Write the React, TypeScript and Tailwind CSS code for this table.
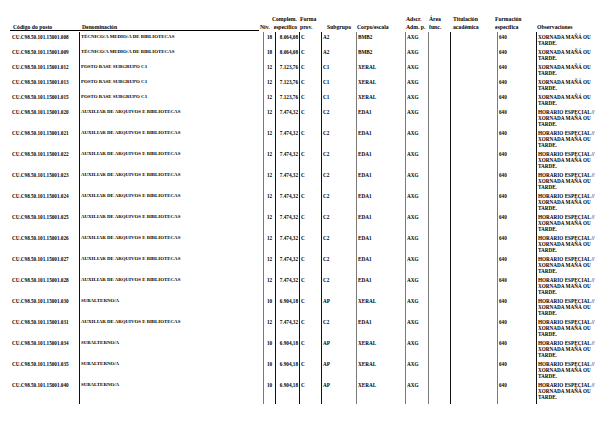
import React from "react";

type Row = {
  code: string;
  name: string;
  niv: string;
  complem: string;
  sub: string;
  corpo: string;
  special: boolean;
};

const TECNICO = "TÉCNICO/A MEDIO/A DE BIBLIOTECAS";
const POSTO = "POSTO BASE SUBGRUPO C1";
const AUX = "AUXILIAR DE ARQUIVOS E BIBLIOTECAS";
const SUBAL = "SUBALTERNO/A";

const ROWS: Row[] = [
  { code: "008", name: TECNICO, niv: "18", complem: "8.064,08", sub: "A2", corpo: "BMB2", special: false },
  { code: "009", name: TECNICO, niv: "18", complem: "8.064,08", sub: "A2", corpo: "BMB2", special: false },
  { code: "012", name: POSTO, niv: "12", complem: "7.123,76", sub: "C1", corpo: "XERAL", special: false },
  { code: "013", name: POSTO, niv: "12", complem: "7.123,76", sub: "C1", corpo: "XERAL", special: false },
  { code: "015", name: POSTO, niv: "12", complem: "7.123,76", sub: "C1", corpo: "XERAL", special: false },
  { code: "020", name: AUX, niv: "12", complem: "7.474,32", sub: "C2", corpo: "EDA1", special: true },
  { code: "021", name: AUX, niv: "12", complem: "7.474,32", sub: "C2", corpo: "EDA1", special: true },
  { code: "022", name: AUX, niv: "12", complem: "7.474,32", sub: "C2", corpo: "EDA1", special: true },
  { code: "023", name: AUX, niv: "12", complem: "7.474,32", sub: "C2", corpo: "EDA1", special: true },
  { code: "024", name: AUX, niv: "12", complem: "7.474,32", sub: "C2", corpo: "EDA1", special: true },
  { code: "025", name: AUX, niv: "12", complem: "7.474,32", sub: "C2", corpo: "EDA1", special: true },
  { code: "026", name: AUX, niv: "12", complem: "7.474,32", sub: "C2", corpo: "EDA1", special: true },
  { code: "027", name: AUX, niv: "12", complem: "7.474,32", sub: "C2", corpo: "EDA1", special: true },
  { code: "028", name: AUX, niv: "12", complem: "7.474,32", sub: "C2", corpo: "EDA1", special: true },
  { code: "030", name: SUBAL, niv: "10", complem: "6.904,18", sub: "AP", corpo: "XERAL", special: true },
  { code: "031", name: AUX, niv: "12", complem: "7.474,32", sub: "C2", corpo: "EDA1", special: true },
  { code: "034", name: SUBAL, niv: "10", complem: "6.904,18", sub: "AP", corpo: "XERAL", special: true },
  { code: "035", name: SUBAL, niv: "10", complem: "6.904,18", sub: "AP", corpo: "XERAL", special: true },
  { code: "040", name: SUBAL, niv: "10", complem: "6.904,18", sub: "AP", corpo: "XERAL", special: true },
];

function Head({ top, bottom, className = "" }: { top?: string; bottom: string; className?: string }) {
  return (
    <div className={`flex flex-col gap-[2px] whitespace-nowrap ${className}`}>
      <div className="h-[6px] leading-[6px]">{top}</div>
      <div className="h-[6px] leading-[6px]">{bottom}</div>
    </div>
  );
}

// vertical rule between two cells
function Rule({ gray = false }: { gray?: boolean }) {
  return <div className={`w-px shrink-0 ${gray ? "bg-[#7a7a7a]" : "bg-[#111]"}`} />;
}

export default function App() {
  return (
    <div className="w-[615px] h-[439px] overflow-hidden bg-white text-black font-bold font-['Liberation_Serif','Times_New_Roman',serif]">
      {/* header */}
      <div className="flex items-end pt-[16px] text-[5.7px]">
        <div className="ml-[10px] flex w-[249px] flex-col">
          <div className="flex">
            <Head bottom="Código do posto" className="w-[71px] pl-[3px]" />
            <Head bottom="Denominación" className="w-[178px] pl-[1px]" />
          </div>
          <div className="h-px bg-black" />
        </div>
        <div className="flex pb-px">
          <Head bottom="Nív." className="w-[11px] pl-[1px]" />
          <Head top="Complem." bottom="específico" className="w-[28px] items-end pr-[1px]" />
          <Head top="Forma" bottom="prov." className="w-[28px] pl-[2px]" />
          <Head bottom="Subgrupo" className="w-[30px] pl-[1px]" />
          <Head bottom="Corpo/escala" className="w-[49px] pl-[1px]" />
          <Head top="Adscr." bottom="Adm. p." className="w-[23px] pl-[1px]" />
          <Head top="Área" bottom="func." className="w-[24px] pl-[1px]" />
          <Head top="Titulación" bottom="académica" className="w-[42px] pl-[1px]" />
          <Head top="Formación" bottom="específica" className="w-[42px] pl-[1px]" />
          <Head bottom="Observaciones" className="pl-[1px]" />
        </div>
      </div>

      {/* rows */}
      <div className="mt-[1px] flex flex-col text-[5.2px] leading-[6px]">
        {ROWS.map((r, i) => {
          const obs = r.special
            ? ["HORARIO ESPECIAL //", "XORNADA MAÑÁ OU", "TARDE."]
            : ["XORNADA MAÑÁ OU", "TARDE."];
          const last = i === ROWS.length - 1;
          return (
            <div key={r.code} className="flex whitespace-nowrap">
              <div className="w-[79px] pl-[12px] pt-[2px]">CU.C98.50.101.15001.{r.code}</div>
              <Rule />
              <div className="w-[183px] pl-[1px] pt-[2px] text-[4.9px]">{r.name}</div>
              <Rule gray />
              <div className="w-[11px] pt-[2px] text-center">{r.niv}</div>
              <Rule />
              <div className="w-[23px] pt-[2px] pr-[1px] text-right">{r.complem}</div>
              <Rule />
              <div className="w-[21px] pl-[1px] pt-[2px]">C</div>
              <Rule />
              <div className="w-[34px] pl-[1px] pt-[2px]">{r.sub}</div>
              <Rule gray />
              <div className="w-[48px] pl-[1px] pt-[2px]">{r.corpo}</div>
              <Rule gray />
              <div className="w-[22px] pl-[1px] pt-[2px]">AXG</div>
              <Rule gray />
              <div className="w-[21px]" />
              <Rule />
              <div className="w-[46px]" />
              <Rule gray />
              <div className="w-[38px] pl-[1px] pt-[2px]">640</div>
              <Rule />
              <div className={`flex-1 pl-[1px] pt-[2px] ${last ? "pb-[4px]" : "pb-[1px]"}`}>
                {obs.map((line) => (
                  <div key={line}>{line}</div>
                ))}
              </div>
            </div>
          );
        })}
      </div>
    </div>
  );
}
